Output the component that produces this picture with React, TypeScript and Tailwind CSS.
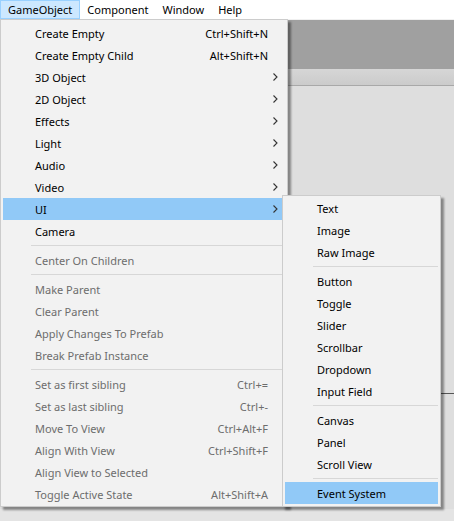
import React from 'react';

type Item =
  | { kind: 'sep' }
  | { kind: 'item'; label: string; shortcut?: string; sub?: boolean; disabled?: boolean; active?: boolean };

const mainItems: Item[] = [
  { kind: 'item', label: 'Create Empty', shortcut: 'Ctrl+Shift+N' },
  { kind: 'item', label: 'Create Empty Child', shortcut: 'Alt+Shift+N' },
  { kind: 'item', label: '3D Object', sub: true },
  { kind: 'item', label: '2D Object', sub: true },
  { kind: 'item', label: 'Effects', sub: true },
  { kind: 'item', label: 'Light', sub: true },
  { kind: 'item', label: 'Audio', sub: true },
  { kind: 'item', label: 'Video', sub: true },
  { kind: 'item', label: 'UI', sub: true, active: true },
  { kind: 'item', label: 'Camera' },
  { kind: 'sep' },
  { kind: 'item', label: 'Center On Children', disabled: true },
  { kind: 'sep' },
  { kind: 'item', label: 'Make Parent', disabled: true },
  { kind: 'item', label: 'Clear Parent', disabled: true },
  { kind: 'item', label: 'Apply Changes To Prefab', disabled: true },
  { kind: 'item', label: 'Break Prefab Instance', disabled: true },
  { kind: 'sep' },
  { kind: 'item', label: 'Set as first sibling', shortcut: 'Ctrl+=', disabled: true },
  { kind: 'item', label: 'Set as last sibling', shortcut: 'Ctrl+-', disabled: true },
  { kind: 'item', label: 'Move To View', shortcut: 'Ctrl+Alt+F', disabled: true },
  { kind: 'item', label: 'Align With View', shortcut: 'Ctrl+Shift+F', disabled: true },
  { kind: 'item', label: 'Align View to Selected', disabled: true },
  { kind: 'item', label: 'Toggle Active State', shortcut: 'Alt+Shift+A', disabled: true },
];

const uiItems: Item[] = [
  { kind: 'item', label: 'Text' },
  { kind: 'item', label: 'Image' },
  { kind: 'item', label: 'Raw Image' },
  { kind: 'sep' },
  { kind: 'item', label: 'Button' },
  { kind: 'item', label: 'Toggle' },
  { kind: 'item', label: 'Slider' },
  { kind: 'item', label: 'Scrollbar' },
  { kind: 'item', label: 'Dropdown' },
  { kind: 'item', label: 'Input Field' },
  { kind: 'sep' },
  { kind: 'item', label: 'Canvas' },
  { kind: 'item', label: 'Panel' },
  { kind: 'item', label: 'Scroll View' },
  { kind: 'sep' },
  { kind: 'item', label: 'Event System', active: true },
];

const Chevron = () => (
  <svg width="5" height="8" viewBox="0 0 5 8" className="block">
    <path d="M0.5 0.5 L4 4 L0.5 7.5" fill="none" stroke="#333" strokeWidth="1.1" />
  </svg>
);

const MenuList = ({ items, withShortcuts }: { items: Item[]; withShortcuts: boolean }) => (
  <div className="flex flex-col px-[2px]">
    {items.map((it, i) =>
      it.kind === 'sep' ? (
        <div key={i} className="h-[7px] flex items-center pl-[28px]">
          <div className="h-px w-full bg-[#d7d7d7]" />
        </div>
      ) : (
        <div
          key={i}
          className={`h-[22px] flex items-center pl-[32px] ${it.active ? 'bg-[#91c9f7]' : ''} ${
            it.disabled ? 'text-[#6d6d6d]' : 'text-black'
          }`}
        >
          <span className="flex-1 whitespace-nowrap">{it.label}</span>
          {withShortcuts && (
            <>
              <span className="whitespace-nowrap">{it.shortcut}</span>
              <span className="w-[17px] flex justify-end pr-[7px]">{it.sub && <Chevron />}</span>
            </>
          )}
        </div>
      )
    )}
  </div>
);

export default function App() {
  return (
    <div
      className="w-[454px] h-[521px] flex flex-col bg-[#e3e3e3] text-[11px] leading-none relative overflow-hidden"
      style={{ fontFamily: '"Segoe UI", "Noto Sans", sans-serif' }}
    >
      {/* menu bar */}
      <div className="h-[19px] bg-white flex items-stretch">
        <div className="px-[7px] flex items-center bg-[#cce8ff] border border-[#99d1ff]">GameObject</div>
        <div className="px-[7px] flex items-center">Component</div>
        <div className="px-[7px] flex items-center">Window</div>
        <div className="px-[7px] flex items-center">Help</div>
      </div>

      {/* editor behind the menu */}
      <div className="flex-1 flex flex-col">
        <div className="h-px bg-[#f0f0f0]" />
        <div className="h-[49px] bg-[#a0a0a0]" />
        <div className="h-[17px] bg-gradient-to-b from-[#d6d6d6] to-[#cbcbcb] border-b border-[#a8a8a8]" />
        <div className="flex-1 bg-[#dedede] relative">
          <div className="absolute right-0 top-[307px] w-[14px] h-px bg-[#555]" />
        </div>
        <div className="h-[12px] bg-[#e4e4e4]" />
      </div>

      {/* GameObject dropdown */}
      <div className="absolute left-0 top-[19px] w-[288px] bg-[#f2f2f2] border border-[#cccccc] pt-[2px] pb-[1px] shadow-[3px_3px_2px_rgba(0,0,0,0.4)]">
        <MenuList items={mainItems} withShortcuts />
      </div>

      {/* UI submenu */}
      <div className="absolute left-[282px] top-[195px] w-[159px] bg-[#f2f2f2] border border-[#cccccc] pt-px pb-[2px] shadow-[3px_3px_2px_rgba(0,0,0,0.4)]">
        <MenuList items={uiItems} withShortcuts={false} />
      </div>
    </div>
  );
}
